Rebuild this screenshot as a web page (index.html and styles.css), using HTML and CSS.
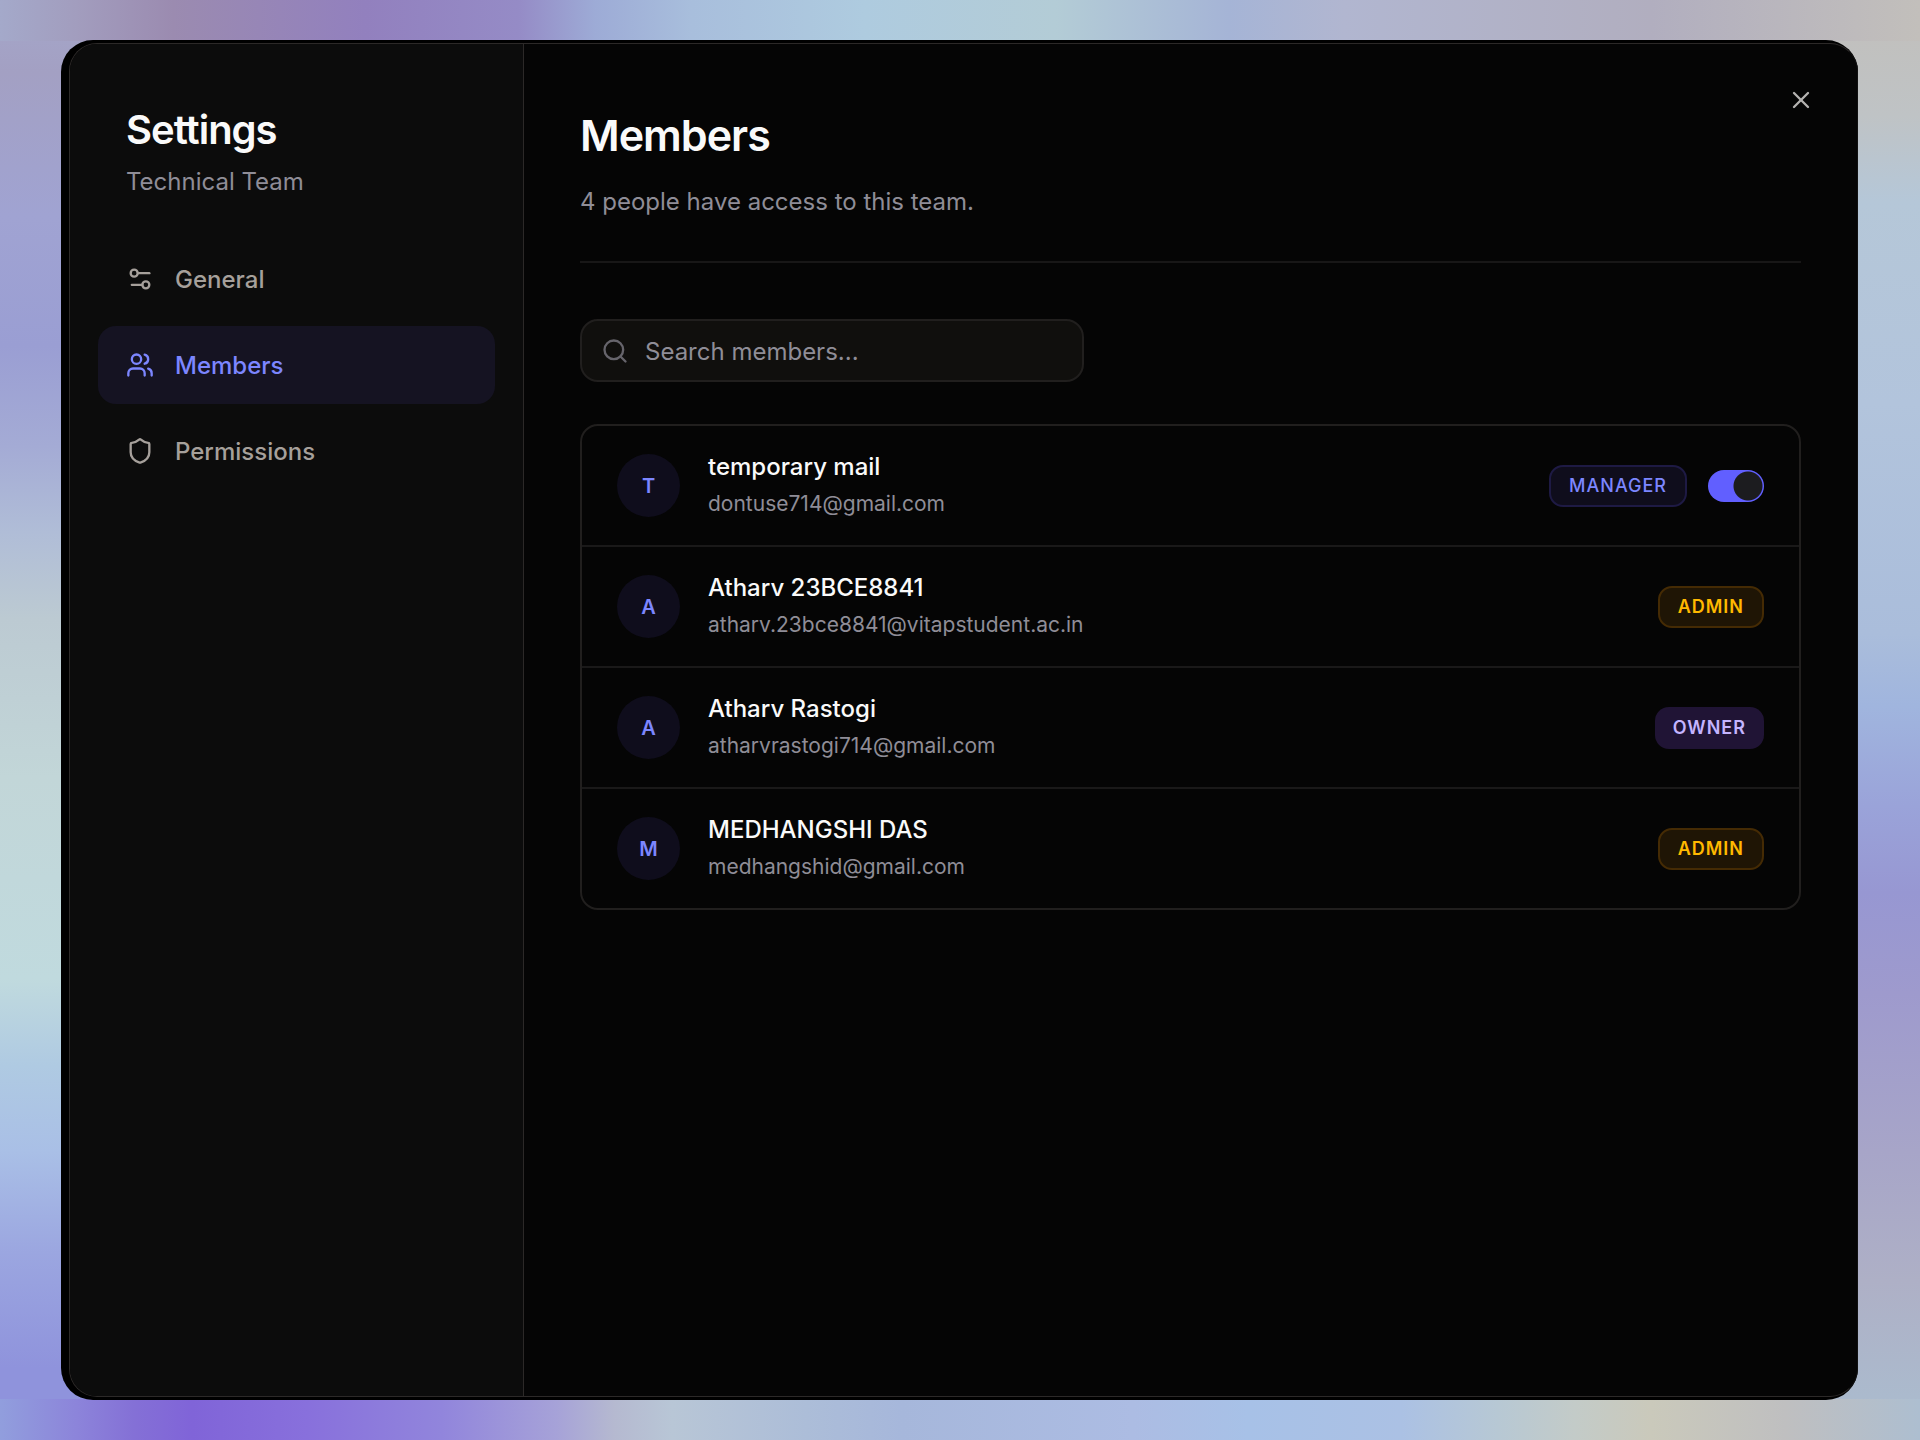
FILE: index.html
```
<!DOCTYPE html>
<html lang="en">
<head>
  <meta charset="UTF-8" />
  <meta name="viewport" content="width=device-width, initial-scale=1.0"/>
  <title>Settings - Members</title>
  <link rel="stylesheet" href="styles.css">
</head>
<body>
  <div class="window">
    <div class="modal">
      <aside class="sidebar">
        <div class="sidebar-head">
          <h2>Settings</h2>
          <p>Technical Team</p>
        </div>
        <nav class="nav">
          <button class="nav-item">
            <svg class="icon" viewBox="0 0 24 24"><path d="M20 7h-9"/><path d="M14 17H5"/><circle cx="17" cy="17" r="3"/><circle cx="7" cy="7" r="3"/></svg>
            General
          </button>
          <button class="nav-item active">
            <svg class="icon" viewBox="0 0 24 24"><path d="M16 21v-2a4 4 0 0 0-4-4H6a4 4 0 0 0-4 4v2"/><circle cx="9" cy="7" r="4"/><path d="M22 21v-2a4 4 0 0 0-3-3.87"/><path d="M16 3.13a4 4 0 0 1 0 7.75"/></svg>
            Members
          </button>
          <button class="nav-item">
            <svg class="icon" viewBox="0 0 24 24"><path d="M20 13c0 5-3.5 7.5-7.66 8.95a1 1 0 0 1-.67-.01C7.5 20.5 4 18 4 13V6a1 1 0 0 1 1-1c2 0 4.500-1.200 6.240-2.720a1.170 1.170 0 0 1 1.520 0C14.510 3.810 17 5 19 5a1 1 0 0 1 1 1z"/></svg>
            Permissions
          </button>
        </nav>
      </aside>
      <main class="content">
        <button class="close" aria-label="Close">
          <svg class="icon" viewBox="0 0 24 24"><path d="M18 6 6 18"/><path d="m6 6 12 12"/></svg>
        </button>
        <header class="content-head">
          <h1>Members</h1>
          <p>4 people have access to this team.</p>
        </header>
        <div class="search">
          <svg class="icon" viewBox="0 0 24 24"><circle cx="11" cy="11" r="8"/><path d="m21 21-4.300-4.300"/></svg>
          <input type="text" aria-label="Search members" placeholder="Search members...">
        </div>
        <ul class="members">
          <li class="member">
            <span class="avatar">T</span>
            <div class="info">
              <p class="name">temporary mail</p>
              <p class="email">dontuse714@gmail.com</p>
            </div>
            <span class="badge manager">MANAGER</span>
            <input class="switch" type="checkbox" role="switch" aria-label="Manager access" checked>
          </li>
          <li class="member">
            <span class="avatar">A</span>
            <div class="info">
              <p class="name">Atharv 23BCE8841</p>
              <p class="email">atharv.23bce8841@vitapstudent.ac.in</p>
            </div>
            <span class="badge admin">ADMIN</span>
          </li>
          <li class="member">
            <span class="avatar">A</span>
            <div class="info">
              <p class="name">Atharv Rastogi</p>
              <p class="email">atharvrastogi714@gmail.com</p>
            </div>
            <span class="badge owner">OWNER</span>
          </li>
          <li class="member">
            <span class="avatar">M</span>
            <div class="info">
              <p class="name">MEDHANGSHI DAS</p>
              <p class="email">medhangshid@gmail.com</p>
            </div>
            <span class="badge admin">ADMIN</span>
          </li>
        </ul>
      </main>
    </div>
  </div>
</body>
</html>
```
FILE: styles.css
```
* { box-sizing: border-box; }
body {
  margin: 0;
  min-height: 100vh;
  padding: 40px 62px 40px 61px;
  display: flex;
  font-family: Inter, 'Liberation Sans', sans-serif;
  font-size: 24px;
  color: #fafafa;
  /* wallpaper: one soft gradient along each edge of the window */
  background-color: #a9bfe2;
  background-image:
    linear-gradient(90deg, #a4a9ca, #a29dbe 4%, #9b8bb0 9%, #9280be 19%, #958bc6 27%, #9dabd6 31%, #a8bedc 36%, #aecbdf 45%, #b3ccd6 55%, #a5b4d6 64%, #b1b6d0 70%, #b1aebf 86%, #c2bfbb),
    linear-gradient(90deg, #919edd, #8c84da 4%, #8470d6 7%, #8064d8 10%, #8870dc 16%, #9185dc 23%, #a6a2d8 29%, #b5b9d0 32%, #b8c6d6 35%, #acbdd8 42%, #a6b7db 47%, #acbce3 59%, #a7c1e7 65%, #abc1e4 73%, #b7c8d4 78%, #c3cbc8 82%, #cac9bb 86%, #bfbfc0 93%, #adbed0),
    linear-gradient(180deg, #a5a7ca, #a3a0c3 5%, #a0a3d2 15%, #9a9ed3 24%, #a4abd5 31%, #b0bdd7 37%, #bccad2 43%, #c2d6d8 54%, #c0dade 68%, #afcae2 74%, #a9bfe6 80%, #9ba6e0 87%, #8f93dc 95%, #8f93dc),
    linear-gradient(180deg, #c2bfbb, #bfc3c5 8%, #b5c7d8 14%, #b2c4dc 28%, #aabddb 44%, #a0b5de 49%, #9aa3d9 56%, #9797d2 62%, #9e9acd 69%, #a7a5c8 80%, #aeb0c6 89%, #abbacd 97%, #adbed0);
  background-size: 100% 41px, 100% 41px, 50% 100%, 50% 100%;
  background-position: top, bottom, left, right;
  background-repeat: no-repeat;
}
h1, h2, p, ul { margin: 0; padding: 0; }
button, input { font: inherit; }
.window {
  flex: 1;
  display: flex;
  padding: 3px 0 3px 8px;
  background: #000;
  border-radius: 32px;
}
.modal {
  flex: 1;
  display: flex;
  background: #050505;
  border: 1px solid #2c2928;
  border-right-color: #111;
  border-radius: 28px;
  overflow: hidden;
}
.icon {
  width: 28px;
  height: 28px;
  flex: none;
  fill: none;
  stroke: currentColor;
  stroke-width: 2;
  stroke-linecap: round;
  stroke-linejoin: round;
}
.sidebar {
  width: 454px;
  padding: 56px 28px;
  background: #0c0c0c;
  border-right: 1px solid #2c2928;
}
.sidebar-head {
  padding: 0 28px;
  margin-bottom: 36px;
}
h2 {
  font-size: 40px;
  line-height: 60px;
  font-weight: 600;
  letter-spacing: -1px;
}
.sidebar-head p, .content-head p {
  line-height: 44px;
  color: #8f8d97;
}
.nav {
  display: flex;
  flex-direction: column;
  gap: 8px;
}
.nav-item {
  display: flex;
  align-items: center;
  gap: 21px;
  height: 78px;
  padding: 0 28px;
  border: none;
  border-radius: 18px;
  background: none;
  color: #a6a09b;
  font-weight: 500;
  cursor: pointer;
}
.nav-item.active {
  background: #151322;
  color: #7c86ff;
}
.content {
  flex: 1;
  position: relative;
  padding: 56px;
}
.close {
  position: absolute;
  top: 42px;
  right: 42px;
  display: flex;
  padding: 0;
  border: none;
  background: none;
  color: #b4b2b0;
  cursor: pointer;
}
.content-head {
  padding-bottom: 37px;
  margin-bottom: 56px;
  border-bottom: 2px solid #181717;
}
h1 {
  margin-bottom: 10px;
  font-size: 43px;
  line-height: 70px;
  font-weight: 600;
  letter-spacing: -1px;
}
.search {
  display: flex;
  align-items: center;
  gap: 16px;
  width: 504px;
  height: 63px;
  margin-bottom: 42px;
  padding: 0 19px;
  background: #100f0d;
  border: 2px solid #211f1e;
  border-radius: 18px;
  color: #66646b;
}
.search input {
  flex: 1;
  min-width: 0;
  padding: 2px 0 0;
  border: none;
  outline: none;
  background: none;
  color: #fafafa;
}
.search input::placeholder { color: #8f8d97; }
.members {
  list-style: none;
  border: 2px solid #211f1e;
  border-radius: 18px;
}
.member {
  box-sizing: content-box;
  display: flex;
  align-items: center;
  gap: 21px;
  height: 119px;
  padding: 0 35px;
}
.member + .member { border-top: 2px solid #1a1919; }
.avatar {
  width: 63px;
  height: 63px;
  margin-right: 7px;
  border-radius: 50%;
  background: #0f0d1c;
  color: #7c86ff;
  font-size: 20px;
  font-weight: 600;
  line-height: 64px;
  text-align: center;
}
.info {
  flex: 1;
  min-width: 0;
  padding-bottom: 2px;
}
.name {
  line-height: 38px;
  font-weight: 500;
}
.email {
  font-size: 21px;
  line-height: 36px;
  color: #8f8d97;
}
.badge {
  padding: 0 18px;
  border: 2px solid;
  border-radius: 14px;
  font-size: 18px;
  line-height: 38px;
  font-weight: 600;
  letter-spacing: 1px;
}
.manager {
  background: #0f0d1c;
  border-color: #1e1a44;
  color: #7c86ff;
  font-weight: 500;
}
.admin {
  background: #1f1505;
  border-color: #452b04;
  color: #ffb900;
}
.owner {
  border: none;
  line-height: 42px;
  background: #201435;
  color: #c4b4ff;
}
.switch {
  appearance: none;
  width: 56px;
  height: 32px;
  margin: 0;
  border-radius: 16px;
  background: radial-gradient(circle at 40px 16px, #1c1c1f 14px, #615fff 15px);
  cursor: pointer;
}
```
